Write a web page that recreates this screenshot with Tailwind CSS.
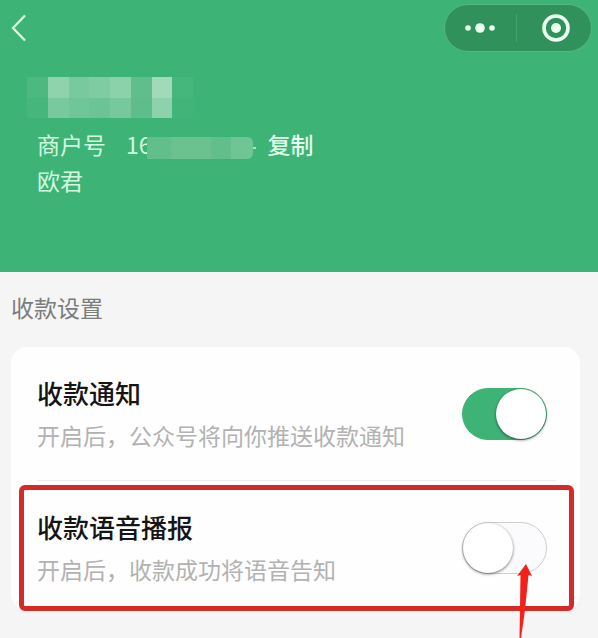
<!DOCTYPE html>
<html lang="zh-CN">
<head>
  <meta charset="utf-8"/>
  <meta content="width=device-width, initial-scale=1" name="viewport"/>
  <title>收款设置</title>
  <script src="https://cdn.jsdelivr.net/npm/@tailwindcss/browser@4"></script>
</head>
<body class="min-h-screen bg-[#f5f5f5] font-['Noto_Sans_CJK_SC',sans-serif] text-[23px] leading-9">
  <!-- Header -->
  <header class="bg-[#3eb376] pb-[74px] text-[#d3fbe0]">
    <nav class="flex items-start justify-between pt-1 pr-[6px] pl-[11px]">
      <a href="#" aria-label="返回" class="mt-[10px]">
        <svg class="h-7 w-4" viewBox="0 0 16 28" fill="none" stroke="#d6fbe0" stroke-width="2.4">
          <path d="M14 1.5 2 14l12 12.5"/>
        </svg>
      </a>
      <div class="flex h-12 w-[148px] items-center rounded-full border border-[#56b67f] bg-[#31915a]">
        <button type="button" aria-label="更多" class="flex flex-1 justify-center">
          <svg class="h-3 w-8" viewBox="0 0 32 12" fill="#eafff0">
            <circle cx="4" cy="6" r="2.8"/>
            <circle cx="16" cy="6" r="4.8"/>
            <circle cx="28" cy="6" r="2.8"/>
          </svg>
        </button>
        <span class="h-7 w-px bg-[#48a06c]"></span>
        <button type="button" aria-label="关闭" class="flex flex-1 justify-center pl-1">
          <svg class="size-7" viewBox="0 0 28 28">
            <circle cx="14" cy="14" r="12" fill="none" stroke="#eafff0" stroke-width="3.6"/>
            <circle cx="14" cy="14" r="5" fill="#eafff0"/>
          </svg>
        </button>
      </div>
    </nav>

    <!-- Masked merchant name -->
    <div class="mt-[25px] ml-[27px] grid h-[41px] w-[166px] grid-cols-8">
      <span class="bg-[#4db981]"></span>
      <span class="bg-[#8fd3ad]"></span>
      <span class="bg-[#78ca9e]"></span>
      <span class="bg-[#7fcca2]"></span>
      <span class="bg-[#8bd1aa]"></span>
      <span class="bg-[#60be8d]"></span>
      <span class="bg-[#a0dab9]"></span>
      <span class="bg-[#45b67c]"></span>
      <span class="bg-[#46b67d]"></span>
      <span class="bg-[#79c99e]"></span>
      <span class="bg-[#70c698]"></span>
      <span class="bg-[#6cc496]"></span>
      <span class="bg-[#77c99d]"></span>
      <span class="bg-[#5dbd8b]"></span>
      <span class="bg-[#8dd2ac]"></span>
      <span class="bg-[#41b479]"></span>
    </div>

    <div class="mt-2 pl-[37px]">
      <div class="flex items-center">
        <span>商户号</span>
        <span class="ml-5 flex items-center">
          <span>16</span>
          <span class="mt-2 -ml-[5px] flex h-[22px] w-[106px] rounded-r-md bg-[#62bf8c]">
            <span class="ml-6 w-10 bg-[#6bc28f]"></span>
            <span class="ml-5 flex-1 rounded-r-md bg-[#6fc596]"></span>
          </span>
          <span class="mt-2 h-0.5 w-[3px] bg-[#a8e6c0]"></span>
        </span>
        <button type="button" class="ml-3 font-medium text-[#e2ffeb]">复制</button>
      </div>
      <p>欧君</p>
    </div>
  </header>

  <!-- Settings -->
  <main class="pt-[17px] pr-[18px] pl-[11px]">
    <h1 class="text-[#7c7c7c]">收款设置</h1>

    <div class="mt-[22px] rounded-2xl bg-[#fefefe]">
      <div class="flex items-center justify-between pt-7 pr-[33px] pb-[27px] pl-[26px]">
        <div>
          <h2 class="text-[26px] font-medium text-[#151515]"><label for="notify">收款通知</label></h2>
          <p id="notifyDesc" class="mt-1.5 text-[#b2b2b2]">开启后，公众号将向你推送收款通知</p>
        </div>
        <input id="notify" type="checkbox" role="switch" aria-describedby="notifyDesc" checked class="flex h-[52px] w-[85px] shrink-0 appearance-none items-center justify-start rounded-full border border-[#cfcfcf] bg-[#fbfafc] before:size-[50px] before:rounded-full before:bg-white before:shadow-[0_1px_3px_rgba(0,0,0,0.55)] checked:justify-end checked:border-[#3eb376] checked:bg-[#3eb376]"/>
      </div>

      <div class="mr-6 ml-[26px] h-px bg-[#ececf0]"></div>

      <div class="relative flex items-center justify-between pt-7 pr-[33px] pb-[23px] pl-[26px]">
        <div>
          <h2 class="text-[26px] font-medium text-[#151515]"><label for="voice">收款语音播报</label></h2>
          <p id="voiceDesc" class="mt-1.5 text-[#b2b2b2]">开启后，收款成功将语音告知</p>
        </div>
        <input id="voice" type="checkbox" role="switch" aria-describedby="voiceDesc" class="flex h-[52px] w-[85px] shrink-0 appearance-none items-center justify-start rounded-full border border-[#cfcfcf] bg-[#fbfafc] before:size-[50px] before:rounded-full before:bg-white before:shadow-[0_1px_3px_rgba(0,0,0,0.55)] checked:justify-end checked:border-[#3eb376] checked:bg-[#3eb376]"/>

        <!-- Highlight frame and arrow -->
        <div class="pointer-events-none absolute inset-x-2 top-1 -bottom-px mr-[-2px] rounded-md border-[5px] border-[#d52b28]"></div>
        <svg class="pointer-events-none absolute top-[83px] right-[47px] h-[74px] w-4" viewBox="0 0 16 74" fill="#f0221a">
          <path d="M9 0 15 12 11.5 11 8 46 4 74 2.5 74 3.5 11 0 12Z"/>
        </svg>
      </div>
    </div>
  </main>
</body>
</html>
